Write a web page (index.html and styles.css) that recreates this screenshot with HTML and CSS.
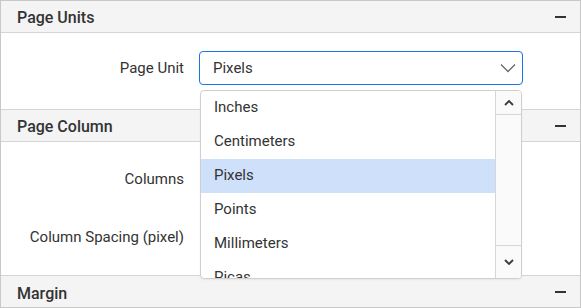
FILE: index.html
```html
<!DOCTYPE html>
<html lang="en">
<head>
    <meta charset="UTF-8">
    <meta name="viewport" content="width=device-width, initial-scale=1.0">
    <title>Page Setup</title>
    <link rel="stylesheet" href="styles.css">
</head>
<body>

<div class="panel">
    <div class="section">
        <div class="section-header">
            <span>Page Units</span>
            <span class="collapse"></span>
        </div>
        <div class="section-body units-body">
            <div class="row">
                <label class="row-label">Page Unit</label>
                <div class="select">
                    <span>Pixels</span>
                    <svg class="chevron" width="16" height="10" viewBox="0 0 16 10">
                        <path d="M1 1.5 L8 8.5 L15 1.5" fill="none" stroke="#6b6b6b" stroke-width="1.3"/>
                    </svg>
                </div>
            </div>
        </div>
    </div>

    <div class="section">
        <div class="section-header">
            <span>Page Column</span>
            <span class="collapse"></span>
        </div>
        <div class="section-body column-body">
            <div class="row">
                <label class="row-label">Columns</label>
                <div class="field"></div>
            </div>
            <div class="row">
                <label class="row-label">Column Spacing (pixel)</label>
                <div class="field"></div>
            </div>
        </div>
    </div>

    <div class="section last">
        <div class="section-header">
            <span>Margin</span>
            <span class="collapse"></span>
        </div>
    </div>

    <!-- open dropdown of the page unit select -->
    <div class="popup">
        <ul class="options">
            <li>Inches</li>
            <li>Centimeters</li>
            <li class="selected">Pixels</li>
            <li>Points</li>
            <li>Millimeters</li>
            <li>Picas</li>
        </ul>
        <div class="scrollbar">
            <div class="scroll-btn scroll-up">
                <svg width="10" height="7" viewBox="0 0 10 7">
                    <path d="M1 6 L5 2 L9 6" fill="none" stroke="#3a3a3a" stroke-width="1.8"/>
                </svg>
            </div>
            <div class="scroll-track"></div>
            <div class="scroll-btn scroll-down">
                <svg width="10" height="7" viewBox="0 0 10 7">
                    <path d="M1 1 L5 5 L9 1" fill="none" stroke="#3a3a3a" stroke-width="1.8"/>
                </svg>
            </div>
        </div>
    </div>
</div>

</body>
</html>
```

FILE: styles.css
```css
body {
    margin: 0;
    padding: 0;
    font-family: Roboto, "Liberation Sans", Arial, sans-serif;
    font-size: 15px;
    color: #333;
    background-color: #fff;
}

.panel {
    position: relative;
    width: 579px;
    height: 306px;
    border: 1px solid #c8c8c8;
    overflow: hidden;
}

.section {
    border-bottom: 1px solid #d4d4d4;
}

.section.last {
    border-bottom: none;
}

.section-header {
    height: 32px;
    box-sizing: border-box;
    background-color: #f4f4f4;
    border-bottom: 1px solid #d4d4d4;
    display: flex;
    align-items: center;
    justify-content: space-between;
    padding: 2px 14px 0 16px;
    font-weight: 500;
    font-size: 16px;
    color: #333;
}

.section.last .section-header {
    border-bottom: none;
}

.collapse {
    width: 11px;
    height: 2px;
    background-color: #333;
    margin-bottom: 2px;
}

.section-body {
    display: flex;
    flex-direction: column;
}

.units-body {
    height: 76px;
    padding-top: 18px;
    box-sizing: border-box;
}

.column-body {
    height: 133px;
    padding-top: 20px;
    gap: 24px;
    box-sizing: border-box;
}

.row {
    display: flex;
    align-items: center;
}

.row-label {
    width: 198px;
    flex-shrink: 0;
    text-align: right;
    padding-right: 15px;
    box-sizing: border-box;
    color: #333;
}

.select {
    width: 324px;
    height: 34px;
    box-sizing: border-box;
    border: 1px solid #1a73e8;
    border-radius: 4px;
    display: flex;
    align-items: center;
    justify-content: space-between;
    padding: 0 6px 0 13px;
    color: #333;
}

.field {
    width: 324px;
    height: 34px;
}

.popup {
    position: absolute;
    left: 199px;
    top: 89px;
    width: 322px;
    height: 189px;
    box-sizing: border-box;
    border: 1px solid #cfcfcf;
    border-radius: 4px;
    background-color: #fff;
    display: flex;
    overflow: hidden;
    box-shadow: 0 1px 2px rgba(0, 0, 0, 0.06);
}

.options {
    list-style: none;
    margin: 0;
    padding: 0;
    flex: 1;
    overflow: hidden;
}

.options li {
    height: 34px;
    line-height: 33px;
    padding-left: 13px;
    color: #333;
}

.options li.selected {
    background-color: #cfe0fb;
}

.scrollbar {
    width: 25px;
    border-left: 1px solid #d6d6d6;
    background-color: #fafafa;
    display: flex;
    flex-direction: column;
}

.scroll-btn {
    display: flex;
    align-items: center;
    justify-content: center;
}

.scroll-up {
    height: 23px;
    border-bottom: 1px solid #d6d6d6;
}

.scroll-track {
    flex: 1;
}

.scroll-down {
    height: 32px;
    border-top: 1px solid #d6d6d6;
}
```
